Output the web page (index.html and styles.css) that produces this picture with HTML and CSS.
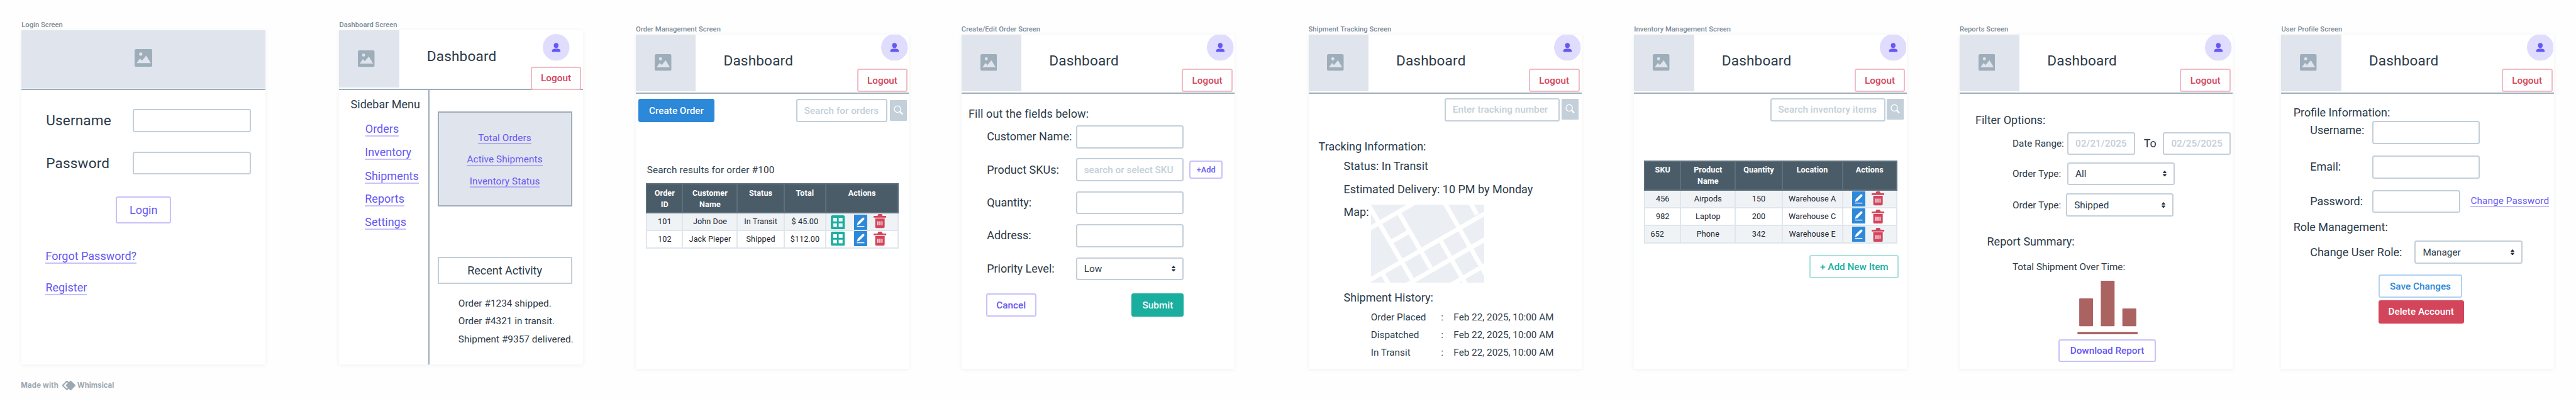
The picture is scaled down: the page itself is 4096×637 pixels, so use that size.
FILE: index.html
```html
<!DOCTYPE html>
<html lang="en">
<head>
<meta charset="utf-8">
<title>Order management wireframes</title>
<link rel="stylesheet" href="styles.css">
</head>
<body>
<svg class="defs" aria-hidden="true">
  <symbol id="picture" viewBox="0 0 24 24" preserveAspectRatio="none">
    <rect width="24" height="24" rx="2.4" fill="#9eadba"/>
    <circle cx="8.3" cy="6.8" r="2.2" fill="#e0e4ec"/>
    <path d="M2.7 19 7.2 12.8 10 15.6 15.7 8.8 21.8 19Z" fill="#e0e4ec"/>
  </symbol>
  <symbol id="person" viewBox="700 24 202 202">
    <circle cx="801" cy="125" r="101" fill="#dfdcfd"/>
    <ellipse cx="801" cy="110" rx="17.5" ry="19" fill="#6558f5"/>
    <path d="M770 159V150C770 139 783 134 801.500 134S833 139 833 150V159Z" fill="#6558f5"/>
  </symbol>
  <symbol id="lens" viewBox="760 525 133 160" preserveAspectRatio="none">
    <rect x="760" y="525" width="133" height="160" rx="7" fill="#c3cfd9"/>
    <circle cx="819" cy="595" r="25" fill="none" stroke="#fff" stroke-width="6.500"/>
    <path d="M838 614 855 631" stroke="#fff" stroke-width="11" stroke-linecap="round"/>
  </symbol>
  <symbol id="updown" viewBox="0 0 18 29">
    <path d="M9 .5Q10 .5 11 1.500L17.500 9.500Q18 12 16 12H2Q0 12 .5 9.500L7 1.500Q8 .5 9 .5ZM9 28.500Q10 28.500 11 27.500L17.500 19.500Q18 17 16 17H2Q0 17 .5 19.500L7 27.500Q8 28.500 9 28.500Z" fill="#2c3b49"/>
  </symbol>
  <symbol id="grid" viewBox="40 266 109 110">
    <path fill-rule="evenodd" d="M54 266H135Q149 266 149 280V362Q149 376 135 376H54Q40 376 40 362V280Q40 266 54 266ZM58 286V314H88V286ZM101 286V314H131V286ZM58 328V357H88V328ZM101 328V357H131V328Z" fill="#1aae9f"/>
  </symbol>
  <symbol id="pen" viewBox="219 263 102 116" preserveAspectRatio="none">
    <rect x="219" y="263" width="102" height="116" rx="2" fill="#2c88d9"/>
    <path d="M241 344 248 321 283 288Q291 282 297 288 302 295 297 301L262 335Z" fill="#f7f9fb"/>
    <path d="M241 353H299" stroke="#f7f9fb" stroke-width="7"/>
  </symbol>
  <symbol id="trash" viewBox="368 262 100 107" preserveAspectRatio="none">
    <path fill-rule="evenodd" d="M372 276H399L404 264Q405 262 408 262H430Q433 262 434 264L439 276H464Q468 276 468 280V286Q468 290 464 290H372Q368 290 368 286V280Q368 276 372 276ZM381 296H455V357Q455 369 443 369H393Q381 369 381 357ZM398 317V347H406V317ZM414 317V347H422V317ZM430 317V347H438V317Z" fill="#d3455b"/>
  </symbol>
</svg>

<main class="board">
  <section class="artboard login">
    <h2 class="name">Login Screen</h2>
    <div class="screen">
      <div class="banner"><svg><use href="#picture"/></svg></div>
      <div class="field"><label class="title">Username</label><span class="input"></span></div>
      <div class="field second"><label class="title">Password</label><span class="input"></span></div>
      <button class="btn purple">Login</button>
      <a class="link forgot">Forgot Password?</a>
      <a class="link register">Register</a>
    </div>
  </section>

  <section class="artboard dash">
    <h2 class="name">Dashboard Screen</h2>
    <div class="screen">
      <header class="top"><div class="logo"><svg><use href="#picture"/></svg></div><h1 class="title">Dashboard</h1>
        <div class="account"><svg class="avatar"><use href="#person"/></svg><button class="btn red">Logout</button></div></header>
      <div class="split">
        <nav>
          <h3 class="text">Sidebar Menu</h3>
          <a class="link n1">Orders</a><a class="link n2">Inventory</a><a class="link n3">Shipments</a><a class="link n4">Reports</a><a class="link n5">Settings</a>
        </nav>
        <div class="content">
          <div class="panel"><a class="link small">Total Orders</a><a class="link small">Active Shipments</a><a class="link small">Inventory Status</a></div>
          <div class="recent">Recent Activity</div>
          <ul class="feed"><li>Order #1234 shipped.</li><li>Order #4321 in transit.</li><li>Shipment #9357 delivered.</li></ul>
        </div>
      </div>
    </div>
  </section>

  <section class="artboard orders">
    <h2 class="name">Order Management Screen</h2>
    <div class="screen">
      <header class="top"><div class="logo"><svg><use href="#picture"/></svg></div><h1 class="title">Dashboard</h1>
        <div class="account"><svg class="avatar"><use href="#person"/></svg><button class="btn red">Logout</button></div></header>
      <div class="toolbar"><button class="btn solid-blue">Create Order</button><span class="input hint">Search for orders</span><svg class="find"><use href="#lens"/></svg></div>
      <p class="results">Search results for order #100</p>
      <div class="table">
        <div class="tr th"><span>Order<br>ID</span><span>Customer<br>Name</span><span>Status</span><span>Total</span><span>Actions</span></div>
        <div class="tr odd"><span>101</span><span>John Doe</span><span>In Transit</span><span>$ 45.00</span><span class="acts a1"><svg class="i-grid"><use href="#grid"/></svg><svg class="i-pen"><use href="#pen"/></svg><svg class="i-trash"><use href="#trash"/></svg></span></div>
        <div class="tr"><span>102</span><span>Jack Pieper</span><span>Shipped</span><span>$112.00</span><span class="acts a2"><svg class="i-grid"><use href="#grid"/></svg><svg class="i-pen"><use href="#pen"/></svg><svg class="i-trash"><use href="#trash"/></svg></span></div>
      </div>
    </div>
  </section>

  <section class="artboard create">
    <h2 class="name">Create/Edit Order Screen</h2>
    <div class="screen">
      <header class="top"><div class="logo"><svg><use href="#picture"/></svg></div><h1 class="title">Dashboard</h1>
        <div class="account"><svg class="avatar"><use href="#person"/></svg><button class="btn red">Logout</button></div></header>
      <h3 class="text lead">Fill out the fields below:</h3>
      <div class="form">
        <div class="row"><label>Customer Name:</label><span class="input"></span></div>
        <div class="row"><label>Product SKUs:</label><span class="input hint">search or select SKU</span><button class="btn purple add">+Add</button></div>
        <div class="row"><label>Quantity:</label><span class="input"></span></div>
        <div class="row"><label>Address:</label><span class="input"></span></div>
        <div class="row"><label>Priority Level:</label><span class="input select">Low<svg><use href="#updown"/></svg></span></div>
      </div>
      <div class="actions"><button class="btn purple">Cancel</button><button class="btn solid-green">Submit</button></div>
    </div>
  </section>

  <section class="artboard shipment">
    <h2 class="name">Shipment Tracking Screen</h2>
    <div class="screen">
      <header class="top"><div class="logo"><svg><use href="#picture"/></svg></div><h1 class="title">Dashboard</h1>
        <div class="account"><svg class="avatar"><use href="#person"/></svg><button class="btn red">Logout</button></div></header>
      <div class="search"><span class="input hint">Enter tracking number</span><svg class="find"><use href="#lens"/></svg></div>
      <h3 class="text lead">Tracking Information:</h3>
      <p class="text status">Status: In Transit</p>
      <p class="text eta">Estimated Delivery: 10 PM by Monday</p>
      <div class="map-row"><span class="text">Map:</span>
        <svg class="map" viewBox="39 36 870 599" preserveAspectRatio="none">
          <rect x="39" y="36" width="870" height="599" fill="#ebeff4"/>
          <g stroke="#fff" stroke-width="34" fill="none">
            <path d="M19 224.500 367 24.500M19 620 929 94.500M310 652 929 293M650 652 929 490M200 318 322 248"/>
            <path d="M12 25 362 623M257 106 497 521M599 15 920 572M796 15 852 112M576 317 776 663M132 572 184 663"/>
          </g>
        </svg>
      </div>
      <h3 class="text history">Shipment History:</h3>
      <dl class="log"><dt>Order Placed</dt><dd>:</dd><dd>Feb 22, 2025, 10:00 AM</dd><dt>Dispatched</dt><dd>:</dd><dd>Feb 22, 2025, 10:00 AM</dd><dt>In Transit</dt><dd>:</dd><dd>Feb 22, 2025, 10:00 AM</dd></dl>
    </div>
  </section>

  <section class="artboard inventory">
    <h2 class="name">Inventory Management Screen</h2>
    <div class="screen">
      <header class="top"><div class="logo"><svg><use href="#picture"/></svg></div><h1 class="title">Dashboard</h1>
        <div class="account"><svg class="avatar"><use href="#person"/></svg><button class="btn red">Logout</button></div></header>
      <div class="search"><span class="input hint">Search inventory items</span><svg class="find"><use href="#lens"/></svg></div>
      <div class="table">
        <div class="tr th"><span>SKU</span><span>Product<br>Name</span><span>Quantity</span><span>Location</span><span>Actions</span></div>
        <div class="tr odd"><span>456</span><span>Airpods</span><span>150</span><span>Warehouse A</span><span class="acts a1"><svg class="i-pen"><use href="#pen"/></svg><svg class="i-trash"><use href="#trash"/></svg></span></div>
        <div class="tr"><span>982</span><span>Laptop</span><span>200</span><span>Warehouse C</span><span class="acts a2"><svg class="i-pen"><use href="#pen"/></svg><svg class="i-trash"><use href="#trash"/></svg></span></div>
        <div class="tr odd"><span class="shift">652</span><span>Phone</span><span>342</span><span>Warehouse E</span><span class="acts a3"><svg class="i-pen"><use href="#pen"/></svg><svg class="i-trash"><use href="#trash"/></svg></span></div>
      </div>
      <button class="btn green new">+ Add New Item</button>
    </div>
  </section>

  <section class="artboard reports">
    <h2 class="name">Reports Screen</h2>
    <div class="screen">
      <header class="top"><div class="logo"><svg><use href="#picture"/></svg></div><h1 class="title">Dashboard</h1>
        <div class="account"><svg class="avatar"><use href="#person"/></svg><button class="btn red">Logout</button></div></header>
      <h3 class="text lead">Filter Options:</h3>
      <div class="row r1"><label>Date Range:</label><span class="input hint">02/21/2025</span><span class="text to">To</span><span class="input hint">02/25/2025</span></div>
      <div class="row r2"><label>Order Type:</label><span class="input select">All<svg><use href="#updown"/></svg></span></div>
      <div class="row r3"><label>Order Type:</label><span class="input select">Shipped<svg><use href="#updown"/></svg></span></div>
      <h3 class="text summary">Report Summary:</h3>
      <p class="over">Total Shipment Over Time:</p>
      <svg class="chart" viewBox="0 0 96.800 84.900" fill="#ab6362">
        <rect x="3.100" y="28" width="21.900" height="44.300" rx="1"/><rect x="37.400" width="21.900" height="72.300" rx="1"/><rect x="71.700" y="43.900" width="22.200" height="28.400" rx="1"/><rect y="81.300" width="96.800" height="3.600" rx="1.800"/>
      </svg>
      <button class="btn purple download">Download Report</button>
    </div>
  </section>

  <section class="artboard profile">
    <h2 class="name">User Profile Screen</h2>
    <div class="screen">
      <header class="top"><div class="logo"><svg><use href="#picture"/></svg></div><h1 class="title">Dashboard</h1>
        <div class="account"><svg class="avatar"><use href="#person"/></svg><button class="btn red">Logout</button></div></header>
      <h3 class="text lead">Profile Information:</h3>
      <div class="row r1"><label>Username:</label><span class="input"></span></div>
      <div class="row r2"><label>Email:</label><span class="input"></span></div>
      <div class="row r3"><label>Password:</label><span class="input"></span><a class="link small">Change Password</a></div>
      <h3 class="text roles">Role Management:</h3>
      <div class="row r4"><label>Change User Role:</label><span class="input select">Manager<svg><use href="#updown"/></svg></span></div>
      <button class="btn blue save">Save Changes</button>
      <button class="btn solid-red delete">Delete Account</button>
    </div>
  </section>
</main>
<footer class="credit"><span>Made with</span>
  <svg viewBox="381 61 111 81"><rect x="398.200" y="78.200" width="47" height="47" rx="4" transform="rotate(45 421.700 101.700)" fill="none" stroke="#9ca7af" stroke-width="10"/><rect x="423" y="73.500" width="57" height="57" rx="7" transform="rotate(45 451.500 102)" fill="#9ca7af"/></svg>
  <span>Whimsical</span></footer>
</body>
</html>
```
FILE: styles.css
```css
* { box-sizing: border-box; margin: 0; padding: 0; }
html, body { width: 4096px; height: 637px; overflow: hidden; background: #fefefe; }
body { font-family: Roboto, "Liberation Sans", sans-serif; font-size: 15.3px; color: #2c3b49; }
.defs { display: none; }
svg { display: block; flex: none; }
h1, h2, h3 { font-weight: 400; }
ul { list-style: none; }

.board { display: flex; align-items: flex-start; height: 599px; padding-left: 34.2px; }
.artboard { flex: none; width: 434px; margin-top: 39.7px; }
.name { height: 15.2px; line-height: 14px; font-size: 11.2px; font-weight: 500; color: #7a8a98; letter-spacing: .03px; white-space: nowrap; }
.screen { display: flex; flex-direction: column; align-items: flex-start; height: 531px; overflow: hidden; background: #fff; box-shadow: 0 1px 6px rgba(40, 55, 70, .07); }

.login, .dash { width: 387.6px; margin-top: 33.1px; }
.dash { margin-left: 117.6px; }
.orders { margin-left: 84.1px; }
.create { margin-left: 83.8px; }
.shipment { margin-left: 117.7px; }
.inventory { margin-left: 83.8px; }
.reports { margin-left: 83.6px; }
.profile { margin-left: 77.5px; }

.title { font-size: 22.6px; letter-spacing: .15px; }
.text, .create label, .profile label { font-size: 18px; line-height: 24px; white-space: nowrap; }

/* header */
.top { display: flex; width: 100%; height: 94.2px; border-bottom: 2px solid #9eadba; }
.logo { width: 95.2px; height: 90.4px; padding: 31.3px 0 0 29.8px; background: #e0e4ec; }
.logo svg { width: 26.7px; height: 26.4px; }
.top .title { margin-left: 44.2px; line-height: 83px; }
.account { display: flex; flex-direction: column; align-items: flex-end; margin-left: auto; }
.avatar { width: 42.6px; height: 42.6px; margin: -.6px 1px 0 0; }
.account .btn { width: 80.8px; margin: 12.4px 2.9px 0 0; }
.orders .account .btn { margin-right: 1.7px; }

/* controls */
.btn { display: block; flex: none; height: 37px; border: 2px solid; border-radius: 3.5px; background: transparent; font: 500 15.3px/32px Roboto, sans-serif; text-align: center; white-space: nowrap; }
.purple { color: #6558f5; border-color: #c8c1fb; }
.red { color: #d3455b; border-color: #f3bbc4; }
.green { color: #1aae9f; border-color: #a8e2db; }
.blue { color: #2c88d9; border-color: #aed3f2; }
.solid-blue { color: #fff; background: #2c88d9; border-color: #2c88d9; }
.solid-green { color: #fff; background: #1aae9f; border-color: #1aae9f; }
.solid-red { color: #fff; background: #d3455b; border-color: #d3455b; }
.input { display: flex; flex: none; align-items: center; height: 36.6px; padding: 0 11px; border: 2px solid #c3cfd9; border-radius: 3.5px; background: #fff; white-space: nowrap; }
.hint { color: #c3cfd9; font-weight: 500; }
.select { width: 171.1px; justify-content: space-between; }
.select svg { width: 6px; height: 9.6px; }
.find { width: 27.3px; height: 33px; }
.link { display: block; width: max-content; font-size: 18px; line-height: 20px; border-bottom: 2px solid #c8c1fb; color: #6558f5; }
.link.small { font-size: 15.3px; line-height: 16.6px; letter-spacing: .1px; }
.row { display: flex; align-items: center; height: 36.6px; }
.row label { white-space: nowrap; }

/* login */
.banner { width: 100%; height: 94.7px; padding: 29.3px 0 0 179.6px; border-bottom: 2px solid #9eadba; background: #e0e4ec; box-shadow: inset 0 -1px #f3f5f8; }
.banner svg { width: 28.3px; height: 28px; }
.field { display: flex; align-items: center; margin-top: 30.4px; padding-left: 39px; }
.field.second { margin-top: 30.9px; }
.field label { width: 138.3px; }
.field .input { width: 187.8px; }
.login .btn { width: 87.9px; height: 43.9px; margin: 34.1px 0 0 150px; font-size: 18px; font-weight: 400; line-height: 39px; }
.forgot { margin: 41.1px 0 0 38.2px; }
.register { margin: 28.8px 0 0 38.2px; }

/* dashboard */
.dash .top { height: 94.7px; }
.dash .logo { padding-top: 32px; }
.dash .avatar { margin: 6.1px 21.3px 0 0; }
.dash .account .btn { margin: 9px 2.5px 0 0; flex: none; }
.split { display: flex; width: 100%; flex: 1; }
nav { width: 141.9px; padding-left: 40.9px; }
nav .text { margin: 11.1px 0 0 -22.7px; }
.n1 { margin: 17.4px 0 0 .5px; }
.n2 { margin-top: 14.6px; }
.n3 { margin-top: 15.8px; }
.n4 { margin-top: 14.2px; }
.n5 { margin-top: 15.3px; }
.content { flex: 1; border-left: 2px solid #9eadba; padding-left: 12.3px; }
.panel { display: flex; flex-direction: column; align-items: center; gap: 16px; width: 214px; height: 150.3px; margin-top: 34.5px; padding-top: 31.1px; border: 2px solid #9eadba; background: #e0e4ec; }
.panel .link { border-color: #b5acf3; }
.recent { width: 214px; height: 43.5px; margin-top: 80.1px; border: 2px solid #c3cfd9; font-size: 18px; line-height: 39.5px; text-align: center; }
.feed { margin-top: 16.6px; padding-left: 33.3px; line-height: 28.4px; letter-spacing: .05px; white-space: nowrap; }

/* tables */
.table { width: 402px; border-left: 2px solid #dfe6ed; font-size: 12.6px; color: #1c2630; letter-spacing: .1px; }
.tr { display: grid; height: 28.1px; line-height: 26.5px; text-align: center; }
.tr > span { border-right: 2px solid #dfe6ed; border-bottom: 2px solid #dfe6ed; overflow: hidden; }
.odd { background: #eff3f6; }
.th { height: 48px; margin-left: -2px; border-left: 2px solid #5e6f7c; padding: 0; background: #4b5c69; color: #fff; font-weight: 700; line-height: 17.5px; }
.th > span { padding-top: 4.8px; border-color: #5e6f7c; border-top: 2px solid #5e6f7c; }
.acts { display: flex; align-items: flex-start; }
.i-grid { width: 22.5px; height: 22.5px; }
.i-pen { width: 20.9px; height: 24px; }
.i-trash { width: 20.3px; height: 22.4px; }

/* order management */
.toolbar { display: flex; align-items: center; margin-top: 8.1px; padding-left: 3.5px; }
.toolbar .btn { width: 121.9px; }
.toolbar .input { width: 145.7px; height: 37px; margin-left: 129.2px; }
.toolbar .find { margin: -1px 0 0 3.2px; }
.results { margin: 63.9px 0 0 17.6px; line-height: 24px; letter-spacing: .15px; }
.orders .table { margin: 9.2px 0 0 16.2px; }
.orders .tr { grid-template-columns: 57.2px 87px 74.3px 66.3px 115.2px; }
.orders .i-grid { margin: 2.5px 0 0 7.2px; }
.orders .i-pen { margin: 1.6px 0 0 14.6px; }
.orders .i-trash { margin: 1.2px 0 0 10.2px; }
.orders .a2 .i-grid { margin-top: .9px; }
.orders .a2 .i-pen { margin-top: .1px; }
.orders .a2 .i-trash { margin-top: .9px; }

/* create / edit order */
.create .lead { margin: 20.1px 0 0 11.2px; letter-spacing: .1px; }
.form { display: flex; flex-direction: column; gap: 15.8px; margin-top: 5.8px; padding-left: 40.3px; }
.form label { width: 141.6px; }
.form .input { width: 171.1px; }
.add { width: 52.7px; height: 29.6px; margin-left: 9.5px; font-size: 12.8px; line-height: 25.6px; }
.actions { display: flex; justify-content: space-between; width: 314.6px; margin: 21.2px 0 0 39px; }
.actions .purple { width: 79.7px; }
.actions .solid-green { width: 83.1px; }

/* search bar */
.search { display: flex; align-items: center; gap: 2.5px; height: 36.6px; margin: 6.9px 0 0 216.2px; }
.search .input { width: 183.4px; }
.search .find { margin-top: -1.6px; }

/* shipment tracking */
.shipment .lead { margin: 28.2px 0 0 16px; }
.status { margin: 7.7px 0 0 56px; }
.eta { margin: 12.5px 0 0 56px; }
.map-row { display: flex; margin: 11.6px 0 0 56px; }
.map-row .text { width: 43px; }
.map { width: 180.3px; height: 124.3px; }
.history { margin: 12px 0 0 56px; }
.log { display: grid; grid-template-columns: 111.6px 20px auto; margin: 4.8px 0 0 99.2px; line-height: 28.2px; white-space: nowrap; }

/* inventory */
.inventory .table { width: 402.8px; margin: 62.1px 0 0 15.9px; }
.inventory .th { height: 48.3px; }
.inventory .tr { grid-template-columns: 57px 87.2px 74.2px 95.9px 86.5px; }
.shift { padding-right: 17px; }
.inventory .i-pen { margin: 1.3px 0 0 14.8px; }
.inventory .i-trash { margin: 1.3px 0 0 10.2px; }
.inventory .a2 .i-pen { margin-top: 0; }
.inventory .a2 .i-trash { margin-top: 1.7px; }
.inventory .a3 .i-pen { margin-top: .9px; }
.inventory .a3 .i-trash { margin-top: 2.4px; }
.new { width: 142px; margin: 18.2px 0 0 279px; }

/* reports */
.reports .lead { margin: 29.8px 0 0 25px; }
.reports .row { padding-left: 84px; }
.reports label { width: 87.1px; }
.reports .hint { width: 107.6px; }
.reports .r1 { margin-top: 6.7px; }
.reports .to { width: 44.8px; padding-left: 14px; }
.reports .r2 { margin-top: 11.4px; }
.reports .r3 { margin-top: 13.3px; }
.reports .r3 label { width: 85.2px; }
.summary { margin: 28.2px 0 0 43.6px; }
.over { margin: 16.2px 0 0 84px; line-height: 24px; }
.chart { width: 96.8px; height: 84.9px; margin: 10px 0 0 186.7px; }
.download { width: 155.6px; height: 36.4px; margin: 7.3px 0 0 156.8px; }

/* profile */
.profile .lead { margin: 18px 0 0 19.2px; }
.profile .row { padding-left: 45.8px; }
.profile label { width: 98.6px; }
.profile .input { width: 171.3px; }
.profile .r1 { margin-top: 1px; }
.profile .r1 label { padding-bottom: 6.8px; }
.profile .r2 { margin-top: 18.3px; }
.profile .r3 { margin-top: 18.2px; }
.profile .r3 .input { width: 140.4px; margin-right: 16.2px; }
.roles { margin: 10.4px 0 0 19.2px; }
.profile .r4 { margin-top: 9.5px; }
.profile .r4 label { width: 166.2px; }
.save { width: 133.6px; height: 36.4px; margin: 17.6px 0 0 154.3px; }
.delete { width: 135.9px; height: 37.3px; margin: 4px 0 0 154.3px; }

.credit { display: flex; align-items: center; height: 26px; padding-left: 33.2px; font: 700 11.4px/26px Inter, sans-serif; color: #9ca7af; white-space: nowrap; }
.credit svg { width: 22.6px; height: 16.4px; margin: 0 2.4px 0 5.1px; }
.credit span:first-child { width: 59.6px; letter-spacing: .2px; }
```
